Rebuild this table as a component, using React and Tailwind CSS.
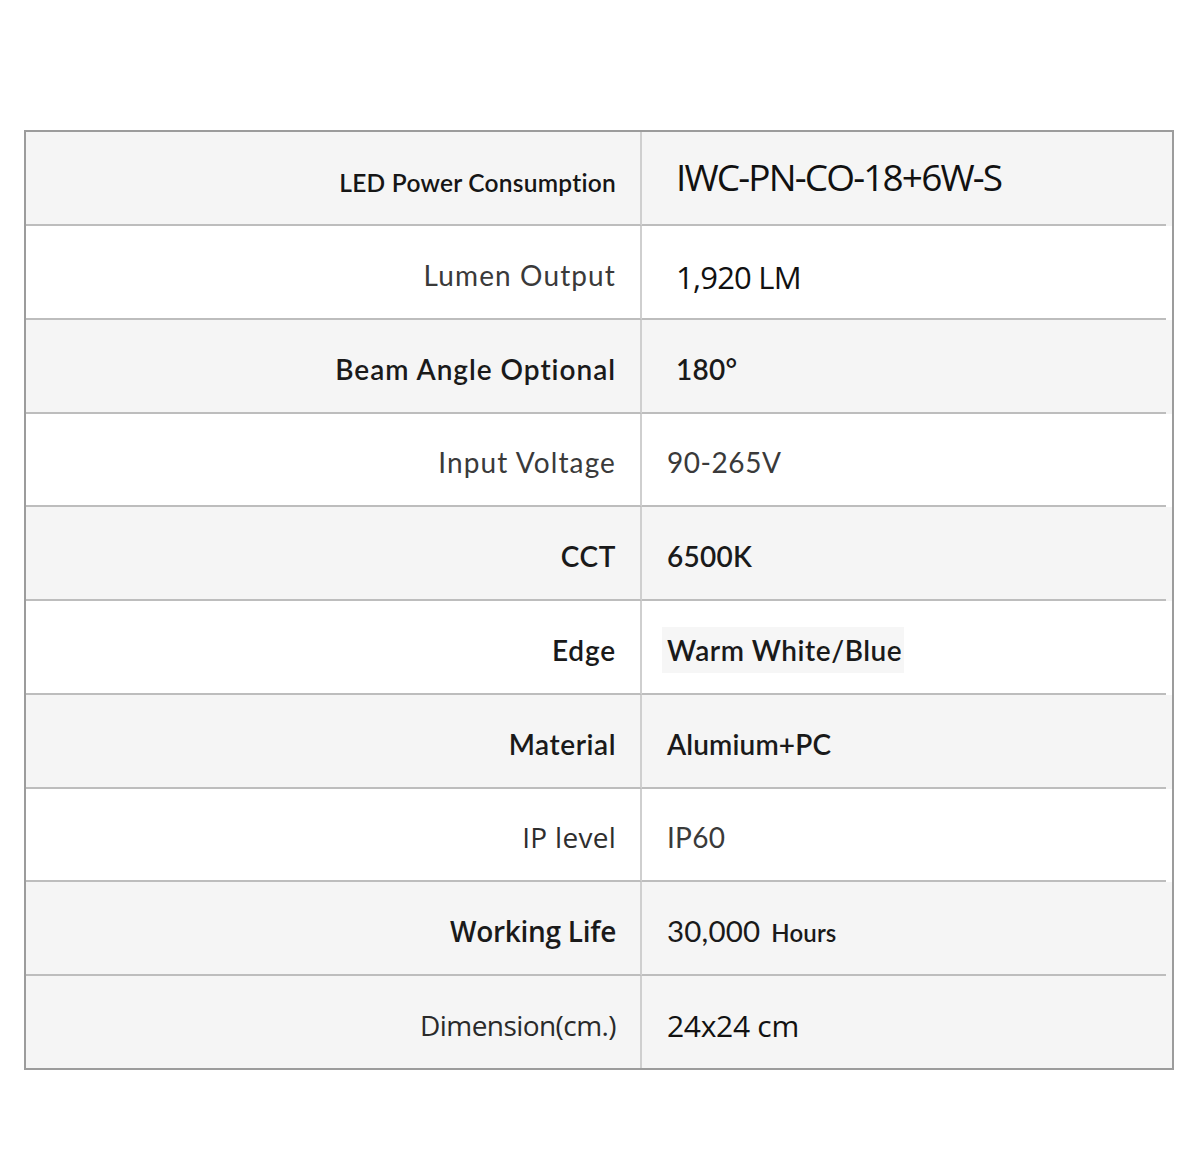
import React from "react";

const GEO = "font-['Lato','Open_Sans',sans-serif]";
const SEG = "font-['Open_Sans','Noto_Sans',sans-serif]";

const rows = [
  {
    h: "h-[94px]",
    bg: "bg-[#f5f5f5]",
    label: <span className={`${GEO} mt-[4px] text-[24.5px] font-semibold text-[#161616] tracking-[0.01em]`}>LED Power Consumption</span>,
    value: <span className={`${SEG} pl-[9px] text-[37px] text-[#111] tracking-[-0.05em] leading-none -mt-[10px]`}>IWC-PN-CO-18+6W-S</span>,
  },
  {
    h: "h-[93.75px]",
    bg: "bg-white",
    label: <span className={`${GEO} text-[28px] text-[#3a3a3a] tracking-[0.04em]`}>Lumen Output</span>,
    value: <span className={`${SEG} pl-[9px] text-[31px] text-[#111] tracking-[-0.025em] mt-[4px]`}>1,920 LM</span>,
  },
  {
    h: "h-[93.75px]",
    bg: "bg-[#f5f5f5]",
    label: <span className={`${GEO} text-[28px] font-semibold text-[#1a1a1a] tracking-[0.035em]`}>Beam Angle Optional</span>,
    value: <span className={`${GEO} pl-[9px] text-[28px] font-semibold text-[#1a1a1a] tracking-[0.01em]`}>180°</span>,
  },
  {
    h: "h-[93.75px]",
    bg: "bg-white",
    label: <span className={`${GEO} text-[28px] text-[#3a3a3a] tracking-[0.04em]`}>Input Voltage</span>,
    value: <span className={`${GEO} text-[28px] text-[#3a3a3a] tracking-[0.02em]`}>90-265V</span>,
  },
  {
    h: "h-[93.75px]",
    bg: "bg-[#f5f5f5]",
    label: <span className={`${GEO} text-[28px] font-semibold text-[#1a1a1a] tracking-[0.02em]`}>CCT</span>,
    value: <span className={`${GEO} text-[28px] font-semibold text-[#1a1a1a] tracking-[0.01em]`}>6500K</span>,
  },
  {
    h: "h-[93.75px]",
    bg: "bg-white",
    label: <span className={`${GEO} text-[28px] font-semibold text-[#1a1a1a] tracking-[0.03em]`}>Edge</span>,
    value: (
      <span className={`${GEO} -ml-[5px] pl-[5px] pr-[2px] py-[9px] bg-[#f6f6f6] text-[28px] font-semibold text-[#1a1a1a] tracking-[0.02em] leading-none`}>
        Warm White/Blue
      </span>
    ),
  },
  {
    h: "h-[93.75px]",
    bg: "bg-[#f5f5f5]",
    label: <span className={`${GEO} text-[28px] font-semibold text-[#1a1a1a] tracking-[0.02em]`}>Material</span>,
    value: <span className={`${GEO} text-[28px] font-semibold text-[#1a1a1a] tracking-[0.005em]`}>Alumium+PC</span>,
  },
  {
    h: "h-[93.75px]",
    bg: "bg-white",
    label: <span className={`${SEG} text-[28px] text-[#2e2e2e] tracking-[0.01em]`}>IP level</span>,
    value: <span className={`${GEO} text-[28px] text-[#3a3a3a] tracking-[0.01em]`}>IP60</span>,
  },
  {
    h: "h-[93.75px]",
    bg: "bg-[#f5f5f5]",
    label: <span className={`${SEG} text-[28px] font-semibold text-[#1a1a1a] tracking-[-0.01em]`}>Working Life</span>,
    value: (
      <span className={`${GEO} text-[#1a1a1a] tracking-[0.01em] flex items-baseline`}>
        <span className="text-[29.5px]">30,000</span>
        <span className="text-[24px] font-semibold ml-[11px]">Hours</span>
      </span>
    ),
  },
  {
    h: "h-[92px]",
    bg: "bg-[#f5f5f5]",
    label: <span className={`${SEG} text-[28px] text-[#2a2a2a] tracking-[-0.02em]`}>Dimension(cm.)</span>,
    value: <span className={`${SEG} text-[30px] text-[#111] tracking-[-0.01em]`}>24x24 cm</span>,
    last: true,
  },
];

export default function App() {
  return (
    <div className="w-[1200px] h-[1152px] bg-white pt-[130px] pl-[24px]">
      <div className="w-[1150px] border-2 border-[#9c9c9c] flex flex-col">
        {rows.map((r, i) => (
          <div key={i} className={`flex ${r.h} ${r.bg}`}>
            <div
              className={`w-[616px] shrink-0 flex items-center justify-end pr-[24px] pt-[6px] border-r-2 border-r-[#cfcfcf] ${
                r.last ? "" : "border-b-2 border-b-[#bdbdbd]"
              }`}
            >
              {r.label}
            </div>
            <div className="flex-1 flex pr-[6px]">
              <div
                className={`flex-1 flex items-center pl-[25px] pt-[6px] ${
                  r.last ? "" : "border-b-2 border-b-[#bdbdbd]"
                }`}
              >
                {r.value}
              </div>
            </div>
          </div>
        ))}
      </div>
    </div>
  );
}
